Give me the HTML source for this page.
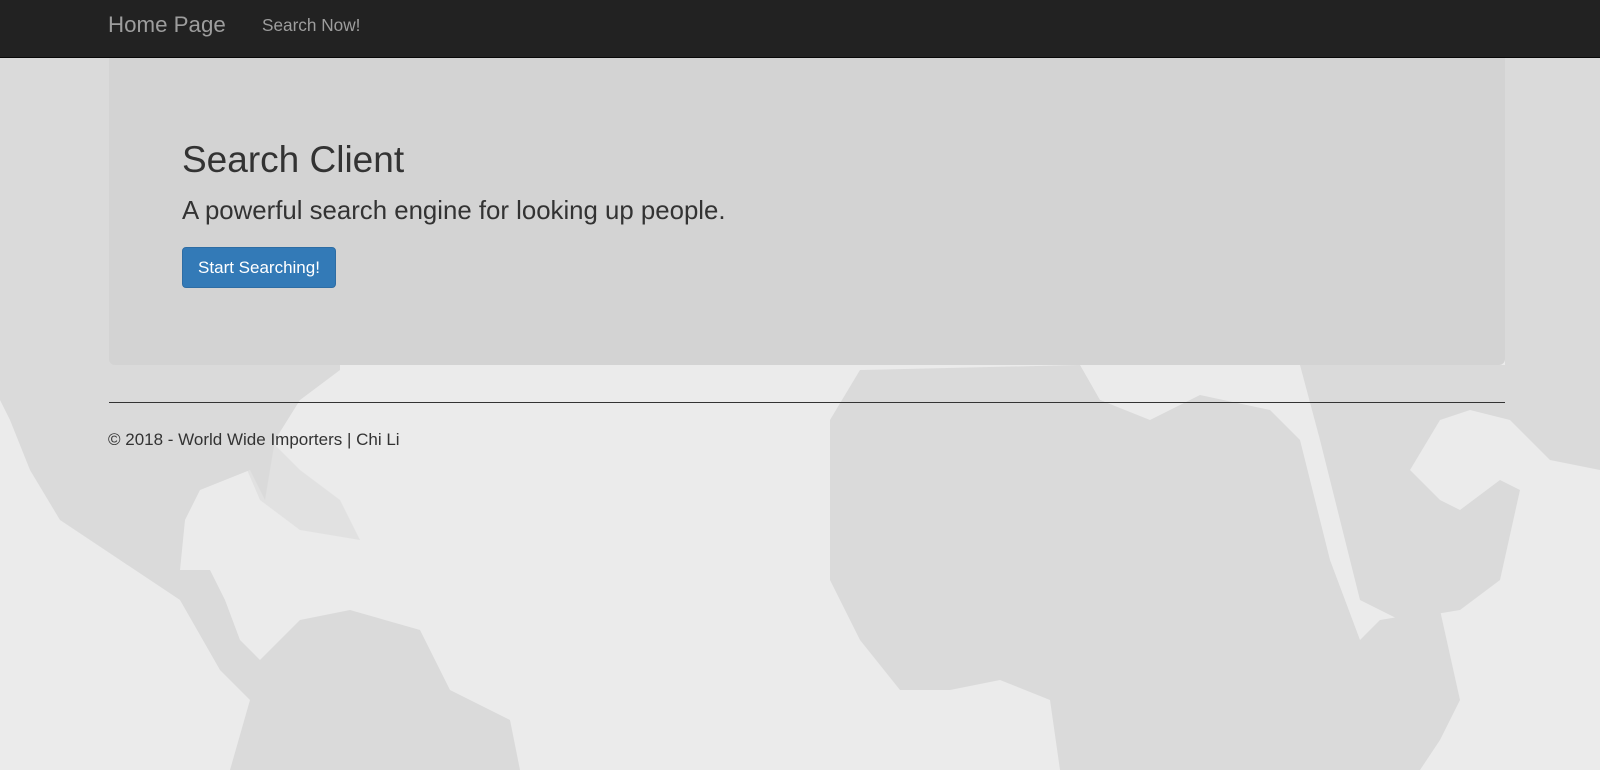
<!DOCTYPE html>
<html><head><meta charset="utf-8"><style>
body{margin:0;width:1600px;height:770px;overflow:hidden;font-family:"Liberation Sans",Arial,sans-serif;background:#ebebeb;position:relative;color:#333}
svg.map{position:absolute;left:0;top:0}
.nav{position:absolute;left:0;top:0;width:1600px;height:57px;background:#222;border-bottom:1px solid #080808}
.brand{position:absolute;left:108px;top:12px;font-size:22.3px;color:#9d9d9d}
.link{position:absolute;left:262px;top:15px;font-size:17.2px;color:#9d9d9d}
.jumbo{position:absolute;left:109px;top:58px;width:1396px;height:307px;background:#d3d3d3;border-radius:0 0 6px 6px}
h1{position:absolute;left:73px;top:82px;margin:0;font-size:37px;font-weight:400;line-height:40px}
.sub{position:absolute;left:73px;top:138px;font-size:25.8px;line-height:30px;white-space:nowrap}
.btn{position:absolute;left:73px;top:189px;width:152px;height:39px;background:#337ab7;border:1px solid #2e6da4;border-radius:4px;color:#fff;font-size:17px;line-height:39px;text-align:center}
hr{position:absolute;left:109px;top:402px;width:1396px;margin:0;border:0;border-top:1px solid #333}
.foot{position:absolute;left:108px;top:430px;font-size:17px;white-space:nowrap}
</style></head><body>
<svg class="map" width="1600" height="770" viewBox="0 0 1600 770">
<g fill="#dadada">
<path d="M0 58 H340 V370 L300 400 L275 440 L265 500 L250 470 L200 490 L185 520 L180 570 L210 570 L225 600 L240 640 L260 660 L300 620 L350 610 L420 630 L450 690 L510 720 L520 770 H230 L250 700 L220 670 L180 600 L120 560 L60 520 L30 470 L10 420 L0 400 Z"/>
<path d="M830 420 L860 370 L1080 365 L1100 400 L1150 420 L1200 395 L1270 410 L1300 440 L1330 560 L1360 640 L1380 620 L1440 610 L1460 700 L1440 740 L1420 770 H1060 L1050 700 L1000 680 L950 690 L900 690 L860 640 L830 580 Z"/>
<path d="M1300 365 H1600 V470 L1550 460 L1510 420 L1470 410 L1440 420 L1410 470 L1440 500 L1460 510 L1500 480 L1520 490 L1500 580 L1460 610 L1400 620 L1360 600 L1340 520 L1320 440 Z"/>
<path d="M1505 58 H1600 V365 H1505 Z"/>
<path d="M230 430 L270 440 L300 470 L340 500 L360 540 L300 530 L260 500 Z" opacity=".6"/>
</g>
</svg>
<div class="nav"><div class="brand">Home Page</div><div class="link">Search Now!</div></div>
<div class="jumbo"><h1>Search Client</h1><div class="sub">A powerful search engine for looking up people.</div><div class="btn">Start Searching!</div></div>
<hr>
<div class="foot">© 2018 - World Wide Importers | Chi Li</div>
</body></html>
